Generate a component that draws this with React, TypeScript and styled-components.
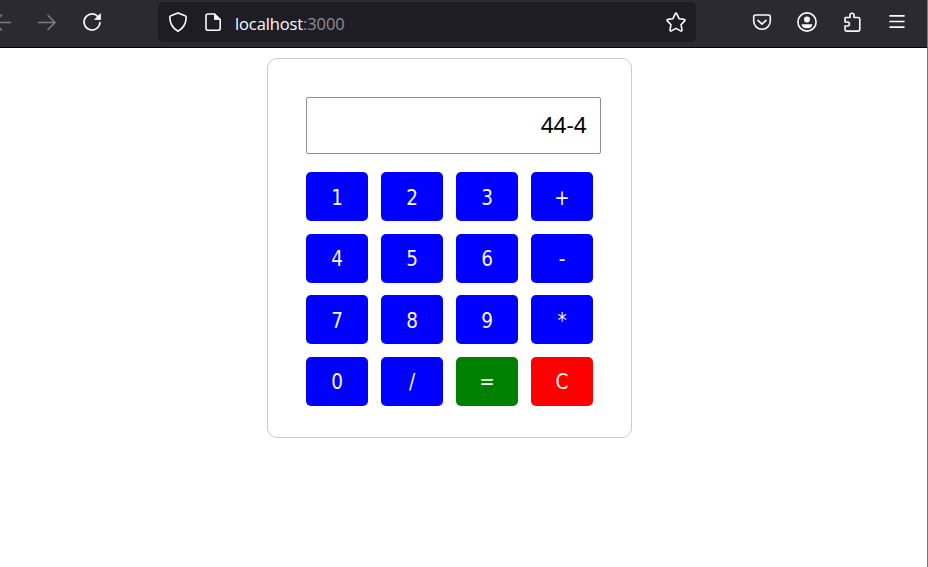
import React from "react";
import styled, { createGlobalStyle } from "styled-components";

const GlobalStyle = createGlobalStyle`
  * { box-sizing: border-box; }
  body { margin: 0; background: #fff; }
`;

const Window = styled.div`
  width: 928px;
  height: 567px;
  overflow: hidden;
  border-right: 1px solid #77777b;
`;

const Toolbar = styled.header`
  display: flex;
  align-items: flex-start;
  height: 48px;
  padding: 2px 20px 0 0;
  background: #2b2a33;
  border-bottom: 1px solid #050408;
`;

const NavGroup = styled.nav`
  display: flex;
  gap: 25px;
  margin: 10px 0 0 -8px;
`;

const Icon = styled.svg<{ $dim?: boolean }>`
  display: block;
  flex: none;
  width: 20px;
  height: 20px;
  overflow: visible;
  fill: none;
  stroke: ${(p) => (p.$dim ? "#7d7c83" : "#fbfbfe")};
  stroke-width: 1.6;
  stroke-linecap: round;
  stroke-linejoin: round;
`;

const AddressBar = styled.div`
  display: flex;
  align-items: center;
  width: 538px;
  height: 40px;
  margin-left: 56px;
  padding: 0 10px;
  border-radius: 5px;
  background: #1e1d25;
`;

const SiteIcons = styled.div`
  display: flex;
  gap: 15px;
`;

const Url = styled.div`
  flex: 1;
  margin-left: 12px;
  padding-top: 3px;
  font: 16.5px/24px "Open Sans", "Noto Sans", sans-serif;
  letter-spacing: -0.12px;
  color: #fbfbfe;
`;

const Port = styled.span`
  color: #8f8e95;
`;

const Actions = styled.div`
  display: flex;
  gap: 25px;
  margin: 10px 0 0 auto;
`;

const Page = styled.main`
  display: flex;
  justify-content: center;
  padding: 10px 28px 0 0;
`;

const Calculator = styled.section`
  width: 365px;
  height: 380px;
  padding: 38px;
  border: 1px solid #ccc;
  border-radius: 10px;
`;

const Display = styled.input`
  display: block;
  width: 295px;
  height: 57px;
  padding: 0 13.5px 2px;
  border: 1px solid #8f8f9d;
  border-radius: 2px;
  outline: none;
  background: #fff;
  color: #000;
  font: 22.5px "Noto Sans", sans-serif;
  text-align: right;
`;

const Keypad = styled.div`
  display: grid;
  grid-template-columns: repeat(4, 62px);
  grid-auto-rows: 49px;
  gap: 12.67px 13px;
  margin-top: 18px;
`;

const Key = styled.button<{ $color?: string }>`
  padding: 2px 0 0;
  border: 0;
  border-radius: 5px;
  background: ${(p) => p.$color ?? "#00f"};
  color: #f5f5f5;
  font: 20.5px/24px "DejaVu Sans Condensed", "DejaVu Sans", sans-serif;
  font-stretch: condensed;
`;

const keys = ["1", "2", "3", "+", "4", "5", "6", "-", "7", "8", "9", "*", "0", "/", "=", "C"];
const keyColors: Record<string, string> = { "=": "#008000", C: "#f00" };

export default function App() {
  return (
    <>
      <GlobalStyle />
      <Window>
        <Toolbar>
          <NavGroup>
            <Icon $dim><path d="M18.5 10.5H2M9.5 3 2 10.5 9.5 18" /></Icon>
            <Icon $dim><path d="M1.5 10.5H18M11 3.5l7 7-7 7" /></Icon>
            <Icon>
              <path d="M16 4.6A8 8 0 1 0 18 10.5" />
              <path d="M18.5 2v5.5H13z" fill="#fbfbfe" strokeWidth="0.8" />
            </Icon>
          </NavGroup>
          <AddressBar>
            <SiteIcons>
              <Icon><path d="M10 .9 17.2 3.7Q18.3 4.2 18.2 5.4C18 11.7 15.8 16.2 10 19.2 4.2 16.2 2 11.7 1.8 5.4Q1.7 4.2 2.8 3.7Z" /></Icon>
              <Icon>
                <path d="M11.5 2H5Q3 2 3 4v12.3q0 2 2 2h10.2q2 0 2-2V7.5Z" />
                <path d="M11.5 2v5.5h5.7z" fill="#fbfbfe" strokeWidth="0.8" />
              </Icon>
            </SiteIcons>
            <Url>localhost<Port>:3000</Port></Url>
            <Icon><path d="m9.2 1.8q.8-1.3 1.6 0l2.3 4.9 5.1.7q1.4.4.5 1.5L15 12.7l1 5.2q0 1.6-1.4 1L10 16.4l-4.6 2.5q-1.4.6-1.4-1l1-5.2-3.7-3.8q-.9-1.1.5-1.5l5.1-.7Z" /></Icon>
          </AddressBar>
          <Actions>
            <Icon>
              <path d="M3.5 3h13q1.8 0 1.8 1.8V9a8.3 8.3 0 0 1-16.6 0V4.8Q1.7 3 3.5 3Z" />
              <path d="m6 8.3 4 3.8 4-3.8" />
            </Icon>
            <Icon>
              <circle cx="10" cy="10" r="9.1" />
              <circle cx="10" cy="7.5" r="3" fill="#fbfbfe" stroke="none" />
              <path d="M4.7 12.2h10.6q0 4-5.3 4t-5.3-4Z" fill="#fbfbfe" stroke="none" />
            </Icon>
            <Icon><path d="M3.4 5.5H8V3.2a2 2 0 0 1 4 0v2.3h4q1.8 0 1.8 1.8v10q0 1.8-1.8 1.8H4.8Q3 19.1 3 17.3V14h2.4a2 2 0 0 0 0-4H3V6.5q0-1 .8-1" /></Icon>
            <Icon><path d="M3 3.9h14M3 9.5h14M3 15.1h14" /></Icon>
          </Actions>
        </Toolbar>
        <Page>
          <Calculator>
            <Display aria-label="Display" value="44-4" readOnly />
            <Keypad>
              {keys.map((k) => (
                <Key key={k} $color={keyColors[k]}>{k}</Key>
              ))}
            </Keypad>
          </Calculator>
        </Page>
      </Window>
    </>
  );
}
